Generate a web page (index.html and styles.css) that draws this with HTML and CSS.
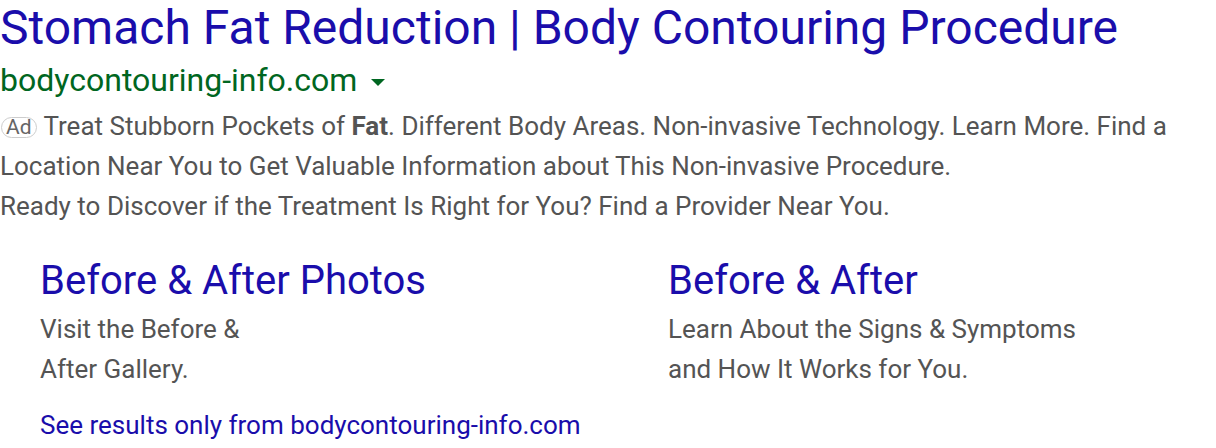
FILE: index.html
```html
<!DOCTYPE html>
<html>
<head>
<meta charset="utf-8">
<link rel="stylesheet" href="styles.css">
</head>
<body>
<div class="ad">
  <a class="title">Stomach Fat Reduction | Body Contouring Procedure</a>
  <div class="url">bodycontouring-info.com <span class="caret"></span></div>
  <div class="desc"><span class="badge">Ad</span> Treat Stubborn Pockets of <b>Fat</b>. Different Body Areas. Non-invasive Technology. Learn More. Find a Location Near You to Get Valuable Information about This Non-invasive Procedure.<br>Ready to Discover if the Treatment Is Right for You? Find a Provider Near You.</div>
  <div class="sitelinks">
    <div class="sl">
      <a class="sl-title">Before &amp; After Photos</a>
      <div class="sl-desc">Visit the Before &amp;<br>After Gallery.</div>
    </div>
    <div class="sl">
      <a class="sl-title">Before &amp; After</a>
      <div class="sl-desc">Learn About the Signs &amp; Symptoms<br>and How It Works for You.</div>
    </div>
  </div>
  <a class="more">See results only from bodycontouring-info.com</a>
</div>
</body>
</html>
```
FILE: styles.css
```css
html, body { margin: 0; padding: 0; background: #fff; }
body { font-family: Roboto, Arial, sans-serif; }
.ad { width: 1216px; }
.title { display: block; color: #1a0dab; font-size: 48px; line-height: 56px; white-space: nowrap; }
.url { color: #006621; font-size: 32px; line-height: 40px; margin-top: 4px; }
.caret { display: inline-block; width: 0; height: 0; border-left: 7px solid transparent; border-right: 7px solid transparent; border-top: 7px solid #006621; vertical-align: middle; margin-left: 6px; }
.desc { color: #545454; font-size: 26px; line-height: 40px; width: 1180px; margin-top: 6px; }
.desc b { color: #545454; }
.badge { display: inline-block; font-size: 21px; line-height: 19px; padding: 0 4px; margin-left: 1px; margin-right: 1px; border: 1px solid #cdcdcd; border-radius: 11px; color: #666; vertical-align: 1px; }
.sitelinks { display: grid; grid-template-columns: 628px 548px; padding-left: 40px; margin-top: 31px; }
.sl-title { display: block; color: #1a0dab; font-size: 40px; line-height: 48px; }
.sl-desc { color: #545454; font-size: 26px; line-height: 40px; margin-top: 4px; }
.more { display: block; color: #1a0dab; font-size: 26px; line-height: 40px; padding-left: 40px; margin-top: 16px; }
```
